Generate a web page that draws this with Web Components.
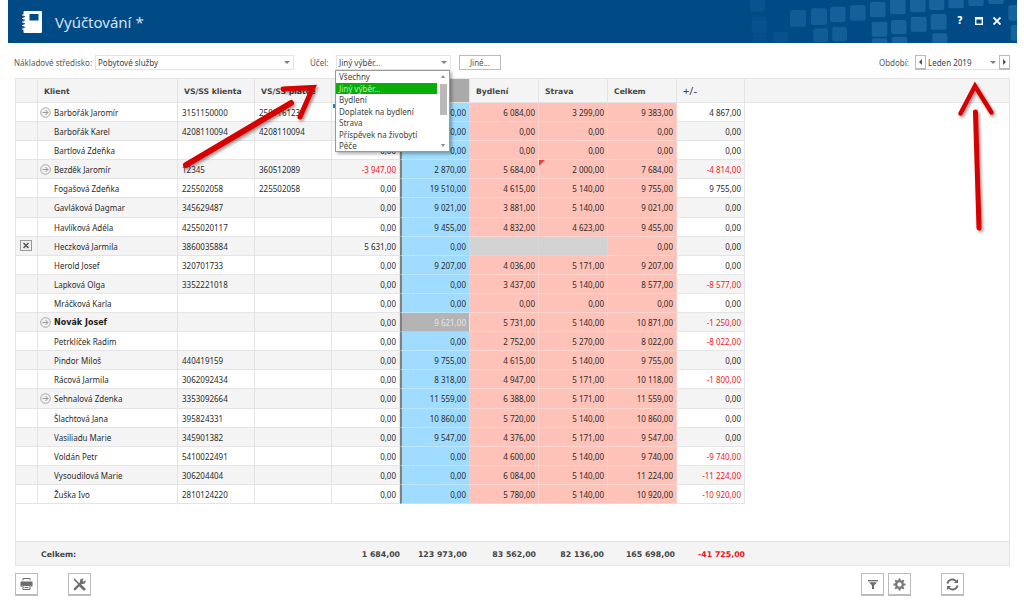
<!doctype html>
<html>
<head>
<meta charset="utf-8">
<style>
  html, body { margin: 0; padding: 0; background: #fff; }
  body { font: 8px "Noto Sans", sans-serif; color: #2b2b2b; }
  #page { position: relative; width: 1024px; height: 610px; overflow: hidden; display: flex; flex-direction: column; }
</style>
</head>
<body>
<div id="page">
  <app-header title="Vyúčtování *"></app-header>
  <filter-bar></filter-bar>
  <data-grid></data-grid>
  <bottom-bar></bottom-bar>
  <arrow-overlay></arrow-overlay>
</div>

<template id="app-header-template">
  <style>
    :host { display: flex; align-items: center; height: 43px; margin: 0 7px 0 8px; background: #004a85; color: #fff; position: relative; overflow: hidden; flex: none; }
    .logo { margin-left: 14px; width: 20px; height: 22px; flex: none; }
    .title { margin-left: 13px; font: 15px "Noto Sans", sans-serif; color: #d3e2ef; }
    .pattern { position: absolute; right: 0; top: 0; }
    .buttons { position: absolute; right: 16px; top: 17px; display: flex; gap: 10.5px; align-items: center; }
    .buttons svg { display: block; }
    .q { font: bold 10px "DejaVu Sans", sans-serif; width: 8px; line-height: 8px; text-align: center; }
  </style>
  <svg class="logo" viewBox="0 0 20 22">
    <rect x="1.5" y="0" width="18.5" height="22" rx="1" fill="#fff"/>
    <rect x="7.5" y="3" width="9" height="6.5" fill="#004a85"/>
    <path d="M0 4h3M0 7.5h3M0 11h3M0 14.5h3M0 18h3" stroke="#fff" stroke-width="1.2"/>
    <path d="M0 5.6h3M0 9.2h3M0 12.7h3M0 16.2h3" stroke="#004a85" stroke-width="1"/>
  </svg>
  <span class="title"></span>
  <svg class="pattern" width="277" height="43" viewBox="0 0 831 129" id="pattern"></svg>
  <div class="buttons">
    <span class="q">?</span>
    <svg width="8" height="8" viewBox="0 0 8 8"><rect x="0.7" y="0.7" width="6.6" height="6.6" fill="none" stroke="#fff" stroke-width="1.4"/><rect x="0" y="0" width="8" height="2.5" fill="#fff"/></svg>
    <svg width="8" height="8" viewBox="0 0 8 8"><path d="M0.5 0.5l7 7M7.5 0.5l-7 7" stroke="#fff" stroke-width="1.9"/></svg>
  </div>
</template>

<template id="combo-box-template">
  <style>
    :host { display: flex; align-items: center; height: 13px; border: 1px solid #e4e4e4; background: #fff; padding-left: 2px; color: #444; position: relative; flex: none; }
    .v { flex: 1; white-space: nowrap; }
    .caret { width: 0; height: 0; border: 3px solid transparent; border-top: 3px solid #808080; border-bottom: 0; margin-right: 3px; }
  </style>
  <span class="v"><slot></slot></span><span class="caret"></span>
</template>

<template id="filter-bar-template">
  <style>
    :host { display: flex; align-items: center; height: 15px; margin: 12px 14px 0 14px; color: #5a5a5a; flex: none; }
    .lbl1 { width: 81px; flex: none; white-space: nowrap; }
    .sp1 { width: 195px; }
    .lbl2 { margin-left: 16px; width: 26px; flex: none; }
    .sp2 { width: 111px; }
    .btn { margin-left: 8px; width: 40px; height: 13px; border: 1px solid #bbb; text-align: center; line-height: 13px; color: #555; flex: none; }
    .gap { flex: 1; }
    .sp3 { width: 71px; border-width: 0 0 1px; height: 14px; }
    .step { width: 9px; height: 12px; border: 1px solid #bbb; border-bottom-width: 2px; display: flex; align-items: center; justify-content: center; flex: none; }
    .lbl3 { margin-right: 6px; }
    .tri-l { border: 3px solid transparent; border-left: 0; border-right: 3px solid #555; }
    .tri-r { border: 3px solid transparent; border-right: 0; border-left: 3px solid #555; }
    .menu { position: absolute; left: 335px; top: 70px; width: 113px; height: 80px; background: #fff; border: 1px solid #999; box-shadow: 2px 2px 3px rgba(0,0,0,.3); z-index: 5; color: #444; display: flex; }
    .list { width: 101px; flex: none; }
    .item { height: 11.5px; line-height: 11.5px; padding-left: 3px; white-space: nowrap; }
    .item.on { background: #08ad08; color: #bfeabf; }
    .bar { flex: 1; position: relative; }
    .thumb { position: absolute; left: 3px; width: 7px; top: 13px; height: 31px; background: #b9b9b9; }
    .up, .dn { position: absolute; left: 4px; width: 0; height: 0; border: 2.5px solid transparent; }
    .up { top: 4px; border-top: 0; border-bottom: 3px solid #888; }
    .dn { bottom: 4px; border-bottom: 0; border-top: 3px solid #888; }
  </style>
  <span class="lbl1">Nákladové středisko:</span>
  <combo-box class="sp1">Pobytové služby</combo-box>
  <span class="lbl2">Účel:</span>
  <combo-box class="sp2">Jiný výběr...</combo-box>
  <span class="btn">Jiné...</span>
  <span class="gap"></span>
  <span class="lbl3">Období:</span>
  <span class="step"><span class="tri-l"></span></span>
  <combo-box class="sp3">Leden 2019</combo-box>
  <span class="step"><span class="tri-r"></span></span>
  <div class="menu">
    <div class="list">
      <div class="item">Všechny</div>
      <div class="item on">Jiný výběr...</div>
      <div class="item">Bydlení</div>
      <div class="item">Doplatek na bydlení</div>
      <div class="item">Strava</div>
      <div class="item">Příspěvek na živobytí</div>
      <div class="item">Péče</div>
    </div>
    <div class="bar"><span class="up"></span><span class="thumb"></span><span class="dn"></span></div>
  </div>
</template>

<template id="data-grid-template">
  <style>
    :host { display: flex; flex-direction: column; margin: 8px 14px 0 15px; height: 488px; border: 1px solid #e4e4e4; box-sizing: border-box; flex: none; }
    .r { display: grid; grid-template-columns: 22px 140px 77px 77px 68px 70px 69px 69px 69px 68px; flex: none; }
    .head { height: 23px; background: #f4f4f4; border-bottom: 1px solid #e4e4e4; color: #444; width: 100%; }
    .head > div { border-right: 1px solid #e4e4e4; display: flex; align-items: center; padding: 1px 0 0 6px; box-sizing: border-box; font: bold 7.7px "DejaVu Sans", sans-serif; white-space: nowrap; overflow: hidden; }
    .head > .dark { background: #aaa; }
    .head > .plus { font: 11px "Noto Sans", sans-serif; padding-top: 0; }
    .body { flex: 1; }
    .foot { height: 24px; background: #f4f4f4; border-top: 1px solid #e4e4e4; align-items: center; color: #444; box-sizing: border-box; padding-top: 1px; }
    .foot > div { text-align: right; box-sizing: border-box; white-space: nowrap; font: bold 7.8px "DejaVu Sans", sans-serif; }
    .foot > .lbl { grid-column: 1 / 3; text-align: left; padding-left: 25px; }
    .foot > .red { color: #f01020; }
  </style>
  <div class="r head">
    <div></div><div>Klient</div><div>VS/SS klienta</div><div>VS/SS plátce</div><div></div><div class="dark"></div><div>Bydlení</div><div>Strava</div><div>Celkem</div><div class="plus">+/-</div>
  </div>
  <div class="body" id="body"></div>
  <div class="r foot" id="foot"></div>
</template>

<template id="grid-row-template">
  <style>
    :host { display: grid; grid-template-columns: 22px 140px 77px 77px 68px 70px 69px 69px 69px 68px; height: 19.1px; width: 729px; }
    :host([odd]) { background: #fff; }
    :host([even]) { background: #f4f4f4; }
    .c { border-right: 1px solid #e4e4e4; border-bottom: 1px solid #e4e4e4; box-sizing: border-box; line-height: 19px; padding: 0 3px 0 4px; white-space: nowrap; overflow: hidden; position: relative; }
    .n { text-align: right; }
    .name { padding-left: 16px; }
    :host([bold]) .name { font: bold 8px/19px "DejaVu Sans", sans-serif; color: #222; }
    .blue { background: #a0dcff; border-right-color: #b4e2fa; border-bottom-color: #bde6fc; border-left: 2px solid #808080; }
    .pink { background: #ffc2b8; border-right-color: #f5d2cc; border-bottom-color: #f8d5cf; }
    .gray { background: #d3d3d3; border-color: #d8d8d8; }
    .sel { background: #b4b4b4; color: #e4e4e4; border-left: 2px solid #808080; border-bottom-color: #c6c6c6; }
    .neg { color: #f01828; }
    .go { position: absolute; left: 2px; top: 4px; }
    .flag::before { content: ""; position: absolute; left: 0; top: 0; border: 3px solid transparent; border-left-color: #e84040; border-top-color: #e84040; }
    .mark::before { content: ""; position: absolute; left: 1px; top: 1px; width: 2px; height: 4px; background: #1d7fd0; }
    .x { display: flex; align-items: center; justify-content: center; height: 18px; margin-left: -3px; }
    .x svg { display: block; }
  </style>
</template>

<template id="bottom-bar-template">
  <style>
    :host { display: flex; margin: 7px 0 0 15px; width: 949px; flex: none; }
    .b { width: 21px; height: 20px; border: 1px solid #bbb; border-bottom-width: 2px; display: flex; align-items: center; justify-content: center; flex: none; }
    .b svg { display: block; }
    .a { margin-left: 30px; }
    .gap { flex: 1; }
    .c { margin-left: 4px; }
    .d { margin-left: 30px; }
  </style>
  <div class="b">
    <svg width="13" height="12" viewBox="0 0 13 12" fill="#6b6b6b">
      <path d="M3 0h7v1H3z"/><path d="M2.5 0.5h1v2h-1zM9.5 0.5h1v2h-1z"/>
      <path d="M0.5 3.5h12v5h-2V7h-8v1.5h-2z"/>
      <path d="M3 7.5h7v4H3z" fill="none" stroke="#6b6b6b"/>
      <path d="M4.5 9.500h4" stroke="#6b6b6b"/>
    </svg>
  </div>
  <div class="b a">
    <svg width="13" height="13" viewBox="0 0 14 14" fill="none" stroke="#707070" stroke-linecap="round">
      <path d="M1.5 1.5L7 7" stroke-width="1.6"/>
      <path d="M8 8l4 4" stroke-width="3"/>
      <path d="M2 12L9 5" stroke-width="2.6"/>
      <circle cx="10.5" cy="3.5" r="3" fill="#707070" stroke="none"/>
      <path d="M10.8 3.2L14 0" stroke="#fff" stroke-width="2.2" stroke-linecap="butt"/>
    </svg>
  </div>
  <div class="gap"></div>
  <div class="b">
    <svg width="10" height="9" viewBox="0 0 10 9" fill="#6b6b6b"><path d="M0 0h10v1.3H0z"/><path d="M1 2.2h8L6 5.4V9H4V5.4z"/></svg>
  </div>
  <div class="b c">
    <svg width="13" height="13" viewBox="0 0 14 14" fill="none" stroke="#777"><circle cx="7" cy="7" r="3.6" stroke-width="2.4"/><path d="M7 0.5v2.5M7 11v2.500M0.5 7H3M11 7h2.5M2.4 2.4l1.800 1.800M9.800 9.800l1.800 1.800M11.600 2.400L9.800 4.200M4.200 9.800l-1.800 1.800" stroke-width="2.2"/></svg>
  </div>
  <div class="b d">
    <svg width="13" height="13" viewBox="0 0 14 14" fill="none" stroke="#6b6b6b" stroke-width="1.9"><path d="M1.5 6a5.5 5.5 0 0 1 9.5-2.5"/><path d="M12.5 8a5.5 5.5 0 0 1-9.5 2.5"/><path d="M13 1v4.5H8.5z" fill="#6b6b6b" stroke="none"/><path d="M1 13V8.5h4.5z" fill="#6b6b6b" stroke="none"/></svg>
  </div>
</template>

<template id="arrow-overlay-template">
  <style>
    :host { position: absolute; left: 0; top: 0; width: 1024px; height: 610px; pointer-events: none; z-index: 9; }
    svg { display: block; }
    path { fill: none; stroke: #d60000; stroke-linecap: round; stroke-linejoin: miter; stroke-miterlimit: 8; }
  </style>
  <svg width="1024" height="610">
    <defs><filter id="s" x="-20%" y="-20%" width="140%" height="140%"><feDropShadow dx="1.5" dy="2" stdDeviation="1.5" flood-color="#000" flood-opacity=".4"/></filter></defs>
    <g filter="url(#s)">
      <path d="M186 165L291 103" stroke-width="6"/>
      <path d="M283 89L313 87.5L300 117" stroke-width="5"/>
      <path d="M975.5 112L979 228" stroke-width="5"/>
      <path d="M960.5 113.5L975 86L991.5 112.5" stroke-width="4.5"/>
    </g>
  </svg>
</template>

<script>
  function cloneTemplate(id) {
    return document.getElementById(id).content.cloneNode(true);
  }

  const ROWS = [
    ["Barbořák Jaromír", "3151150000", "250116123", "", "0,00", "6 084,00", "3 299,00", "9 383,00", "4 867,00", { go: 1, mark: 1 }],
    ["Barbořák Karel", "4208110094", "4208110094", "", "0,00", "0,00", "0,00", "0,00", "0,00"],
    ["Bartlová Zdeňka", "", "", "0,00", "0,00", "0,00", "0,00", "0,00", "0,00"],
    ["Bezděk Jaromír", "12345", "360512089", "-3 947,00", "2 870,00", "5 684,00", "2 000,00", "7 684,00", "-4 814,00", { go: 1, flag: 1 }],
    ["Fogašová Zdeňka", "225502058", "225502058", "0,00", "19 510,00", "4 615,00", "5 140,00", "9 755,00", "9 755,00"],
    ["Gavláková Dagmar", "345629487", "", "0,00", "9 021,00", "3 881,00", "5 140,00", "9 021,00", "0,00"],
    ["Havlíková Adéla", "4255020117", "", "0,00", "9 455,00", "4 832,00", "4 623,00", "9 455,00", "0,00"],
    ["Heczková Jarmila", "3860035884", "", "5 631,00", "0,00", "", "", "0,00", "0,00", { x: 1, gray: 1 }],
    ["Herold Josef", "320701733", "", "0,00", "9 207,00", "4 036,00", "5 171,00", "9 207,00", "0,00"],
    ["Lapková Olga", "3352221018", "", "0,00", "0,00", "3 437,00", "5 140,00", "8 577,00", "-8 577,00"],
    ["Mráčková Karla", "", "", "0,00", "0,00", "0,00", "0,00", "0,00", "0,00"],
    ["Novák Josef", "", "", "0,00", "9 621,00", "5 731,00", "5 140,00", "10 871,00", "-1 250,00", { go: 1, bold: 1, sel: 1 }],
    ["Petrklíček Radim", "", "", "0,00", "0,00", "2 752,00", "5 270,00", "8 022,00", "-8 022,00"],
    ["Pindor Miloš", "440419159", "", "0,00", "9 755,00", "4 615,00", "5 140,00", "9 755,00", "0,00"],
    ["Rácová Jarmila", "3062092434", "", "0,00", "8 318,00", "4 947,00", "5 171,00", "10 118,00", "-1 800,00"],
    ["Sehnalová Zdenka", "3353092664", "", "0,00", "11 559,00", "6 388,00", "5 171,00", "11 559,00", "0,00", { go: 1 }],
    ["Šlachtová Jana", "395824331", "", "0,00", "10 860,00", "5 720,00", "5 140,00", "10 860,00", "0,00"],
    ["Vasiliadu Marie", "345901382", "", "0,00", "9 547,00", "4 376,00", "5 171,00", "9 547,00", "0,00"],
    ["Voldán Petr", "5410022491", "", "0,00", "0,00", "4 600,00", "5 140,00", "9 740,00", "-9 740,00"],
    ["Vysoudilová Marie", "306204404", "", "0,00", "0,00", "6 084,00", "5 140,00", "11 224,00", "-11 224,00"],
    ["Žuška Ivo", "2810124220", "", "0,00", "0,00", "5 780,00", "5 140,00", "10 920,00", "-10 920,00"],
  ];
  const TOTALS = [
    ["1 684,00", 0], ["123 973,00", 3], ["83 562,00", 3],
    ["82 136,00", 4], ["165 698,00", 2], ["-41 725,00", 0],
  ];

  // Mosaic squares read off the reference, in 3x units from the left of the svg
  const MOSAIC = [
    [150, 30, 48, 50, .18], [213, 25, 48, 50, .2], [270, 20, 47, 47, .22], [330, 15, 47, 47, .22],
    [390, 5, 47, 47, .24], [450, -2, 47, 45, .25], [510, -8, 47, 45, .25], [567, -13, 46, 43, .25],
    [625, -18, 46, 43, .25], [685, -25, 46, 43, .25], [745, -30, 46, 42, .25],
    [395, 65, 47, 45, .25], [453, 60, 47, 43, .25], [512, 50, 48, 45, .25], [572, 42, 48, 47, .25],
    [220, 85, 44, 42, .18], [277, 80, 44, 44, .2], [395, 115, 47, 30, .24], [455, 110, 47, 30, .24], [577, 100, 45, 30, .25],
    [30, -10, 45, 45, .1], [35, 50, 45, 50, .08], [100, 95, 45, 35, .08], [40, 100, 40, 30, .06],
    [805, 15, 30, 47, .25], [812, 75, 30, 47, .25],
  ];

  const GO_ICON = '<svg class="go" width="11" height="11" viewBox="0 0 11 11" fill="none" stroke="#a8a8a8"><circle cx="5.5" cy="5.5" r="4.8" fill="#f2f2f2"/><path d="M2.5 5.5h5.500" stroke="#999"/><path d="M5.500 3L8 5.500 5.500 8" stroke="#999"/></svg>';
  const X_ICON = '<div class="x"><svg width="12" height="11" viewBox="0 0 12 11"><rect x="0.5" y="0.5" width="11" height="10" fill="#eee" stroke="#999"/><path d="M3.5 3l5 5M8.5 3l-5 5" stroke="#555" stroke-width="1.5"/></svg></div>';

  customElements.define("app-header", class extends HTMLElement {
    connectedCallback() {
      this.attachShadow({ mode: "open" });
      this.shadowRoot.appendChild(cloneTemplate("app-header-template"));
      this.shadowRoot.querySelector(".title").textContent = this.getAttribute("title");
      this.shadowRoot.getElementById("pattern").innerHTML = MOSAIC.map(
        ([x, y, w, h, a]) => `<rect x="${x}" y="${y}" width="${w}" height="${h}" rx="6" fill="#5bb0e0" fill-opacity="${a}"/>`
      ).join("");
    }
  });

  customElements.define("combo-box", class extends HTMLElement {
    connectedCallback() {
      this.attachShadow({ mode: "open" });
      this.shadowRoot.appendChild(cloneTemplate("combo-box-template"));
    }
  });

  customElements.define("filter-bar", class extends HTMLElement {
    connectedCallback() {
      this.attachShadow({ mode: "open" });
      this.shadowRoot.appendChild(cloneTemplate("filter-bar-template"));
    }
  });

  customElements.define("grid-row", class extends HTMLElement {
    set data(d) {
      const opts = d[9] || {};
      this.attachShadow({ mode: "open" });
      this.shadowRoot.appendChild(cloneTemplate("grid-row-template"));
      if (opts.bold) this.setAttribute("bold", "");
      const cell = (cls, html) => `<div class="c ${cls}">${html}</div>`;
      const neg = (v) => (v.startsWith("-") ? " neg" : "");
      const fill = opts.gray ? "gray" : "pink";
      let html = cell("", opts.x ? X_ICON : "");
      html += cell("name", (opts.go ? GO_ICON : "") + d[0]);
      html += cell("", d[1]) + cell("", d[2]);
      html += cell("n" + neg(d[3]) + (opts.mark ? " mark" : ""), d[3]);
      html += cell("n " + (opts.sel ? "sel" : "blue"), d[4]);
      html += cell("n " + fill, d[5]);
      html += cell("n " + fill + (opts.flag ? " flag" : ""), d[6]);
      html += cell("n pink", d[7]);
      html += cell("n" + neg(d[8]), d[8]);
      const wrap = document.createElement("template");
      wrap.innerHTML = html;
      this.shadowRoot.appendChild(wrap.content);
    }
  });

  customElements.define("data-grid", class extends HTMLElement {
    connectedCallback() {
      this.attachShadow({ mode: "open" });
      this.shadowRoot.appendChild(cloneTemplate("data-grid-template"));
      const body = this.shadowRoot.getElementById("body");
      ROWS.forEach((d, i) => {
        const row = document.createElement("grid-row");
        row.setAttribute(i % 2 ? "even" : "odd", "");
        row.data = d;
        body.appendChild(row);
      });
      let foot = '<div class="lbl">Celkem:</div><div></div><div></div>';
      TOTALS.forEach(([t, pad]) => {
        foot += `<div class="${t.startsWith("-") ? "red" : ""}" style="padding-right:${pad}px">${t}</div>`;
      });
      this.shadowRoot.getElementById("foot").innerHTML = foot;
    }
  });

  customElements.define("bottom-bar", class extends HTMLElement {
    connectedCallback() {
      this.attachShadow({ mode: "open" });
      this.shadowRoot.appendChild(cloneTemplate("bottom-bar-template"));
    }
  });

  customElements.define("arrow-overlay", class extends HTMLElement {
    connectedCallback() {
      this.attachShadow({ mode: "open" });
      this.shadowRoot.appendChild(cloneTemplate("arrow-overlay-template"));
    }
  });
</script>
</body>
</html>
